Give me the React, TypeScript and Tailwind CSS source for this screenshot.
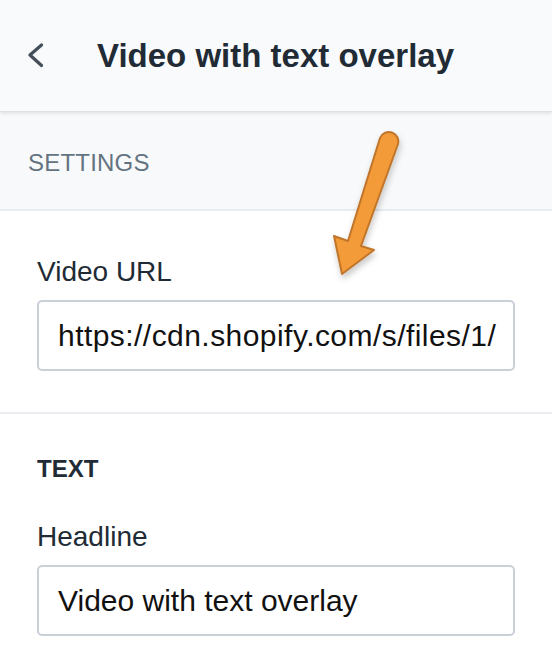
import React from "react";

const font = { fontFamily: '"Liberation Sans", Arial, sans-serif' };

const Field = ({ label, value, tracking }: { label: string; value: string; tracking?: string }) => {
	return (
		<div className="flex flex-col">
			<label className="text-[28px] leading-[34px] text-[#212b36]">{label}</label>
			<div className="mt-[11px] h-[71px] flex items-center border-2 border-[#c9d0d8] rounded-[5px] bg-white pl-[19px] pr-[8px] overflow-hidden">
				<span className={"text-[30px] leading-[36px] text-[#111] whitespace-nowrap " + (tracking || "")}>{value}</span>
			</div>
		</div>
	);
};

const Arrow = () => (
	<svg className="absolute left-0 top-0 pointer-events-none" width={552} height={668} viewBox="0 0 552 668">
		<defs>
			<filter id="shadow" x="-50%" y="-50%" width="200%" height="200%">
				<feDropShadow dx="1" dy="4" stdDeviation="3" floodColor="#000" floodOpacity="0.22" />
			</filter>
		</defs>
		<path
			d="M 380 138 A 9.5 9.5 0 0 1 398 144 L 361 246 L 374 250 L 342 274 L 334 236 L 348 241 Z"
			fill="#f29b38"
			stroke="#c0752a"
			strokeWidth={2}
			strokeLinejoin="round"
			filter="url(#shadow)"
		/>
	</svg>
);

export default function App() {
	return (
		<div className="relative w-[552px] h-[668px] bg-white overflow-hidden" style={font}>
			<div className="h-[112px] flex items-center pl-[27px] bg-[#f9fafb] border-b border-[#dde1e5] shadow-[0_2px_3px_rgba(0,0,0,0.08)] relative z-10">
				<svg width={18} height={26} viewBox="0 0 18 26" className="shrink-0">
					<path d="M 14.5 2 L 3 12 L 14.5 22.5" fill="none" stroke="#454f5b" strokeWidth={3.2} strokeLinecap="round" strokeLinejoin="round" />
				</svg>
				<h1 className="ml-[52px] text-[33px] leading-[40px] font-bold text-[#212b36]">Video with text overlay</h1>
			</div>
			<div className="h-[99px] flex items-center px-[28px] pt-[5px] bg-[#f8f9fa] border-b-2 border-[#e9ecef]">
				<span className="text-[24px] leading-[30px] tracking-[0.2px] text-[#637381]">SETTINGS</span>
			</div>
			<div className="px-[37px] pt-[44px] pb-[41px] border-b-2 border-[#ebedf0]">
				<Field label="Video URL" value="https://cdn.shopify.com/s/files/1/" tracking="tracking-[0.45px]" />
			</div>
			<div className="px-[37px] pt-[40px]">
				<div className="text-[24px] leading-[30px] font-bold text-[#212b36]">TEXT</div>
				<div className="mt-[36px]">
					<Field label="Headline" value="Video with text overlay" />
				</div>
			</div>
			<Arrow />
		</div>
	);
}
